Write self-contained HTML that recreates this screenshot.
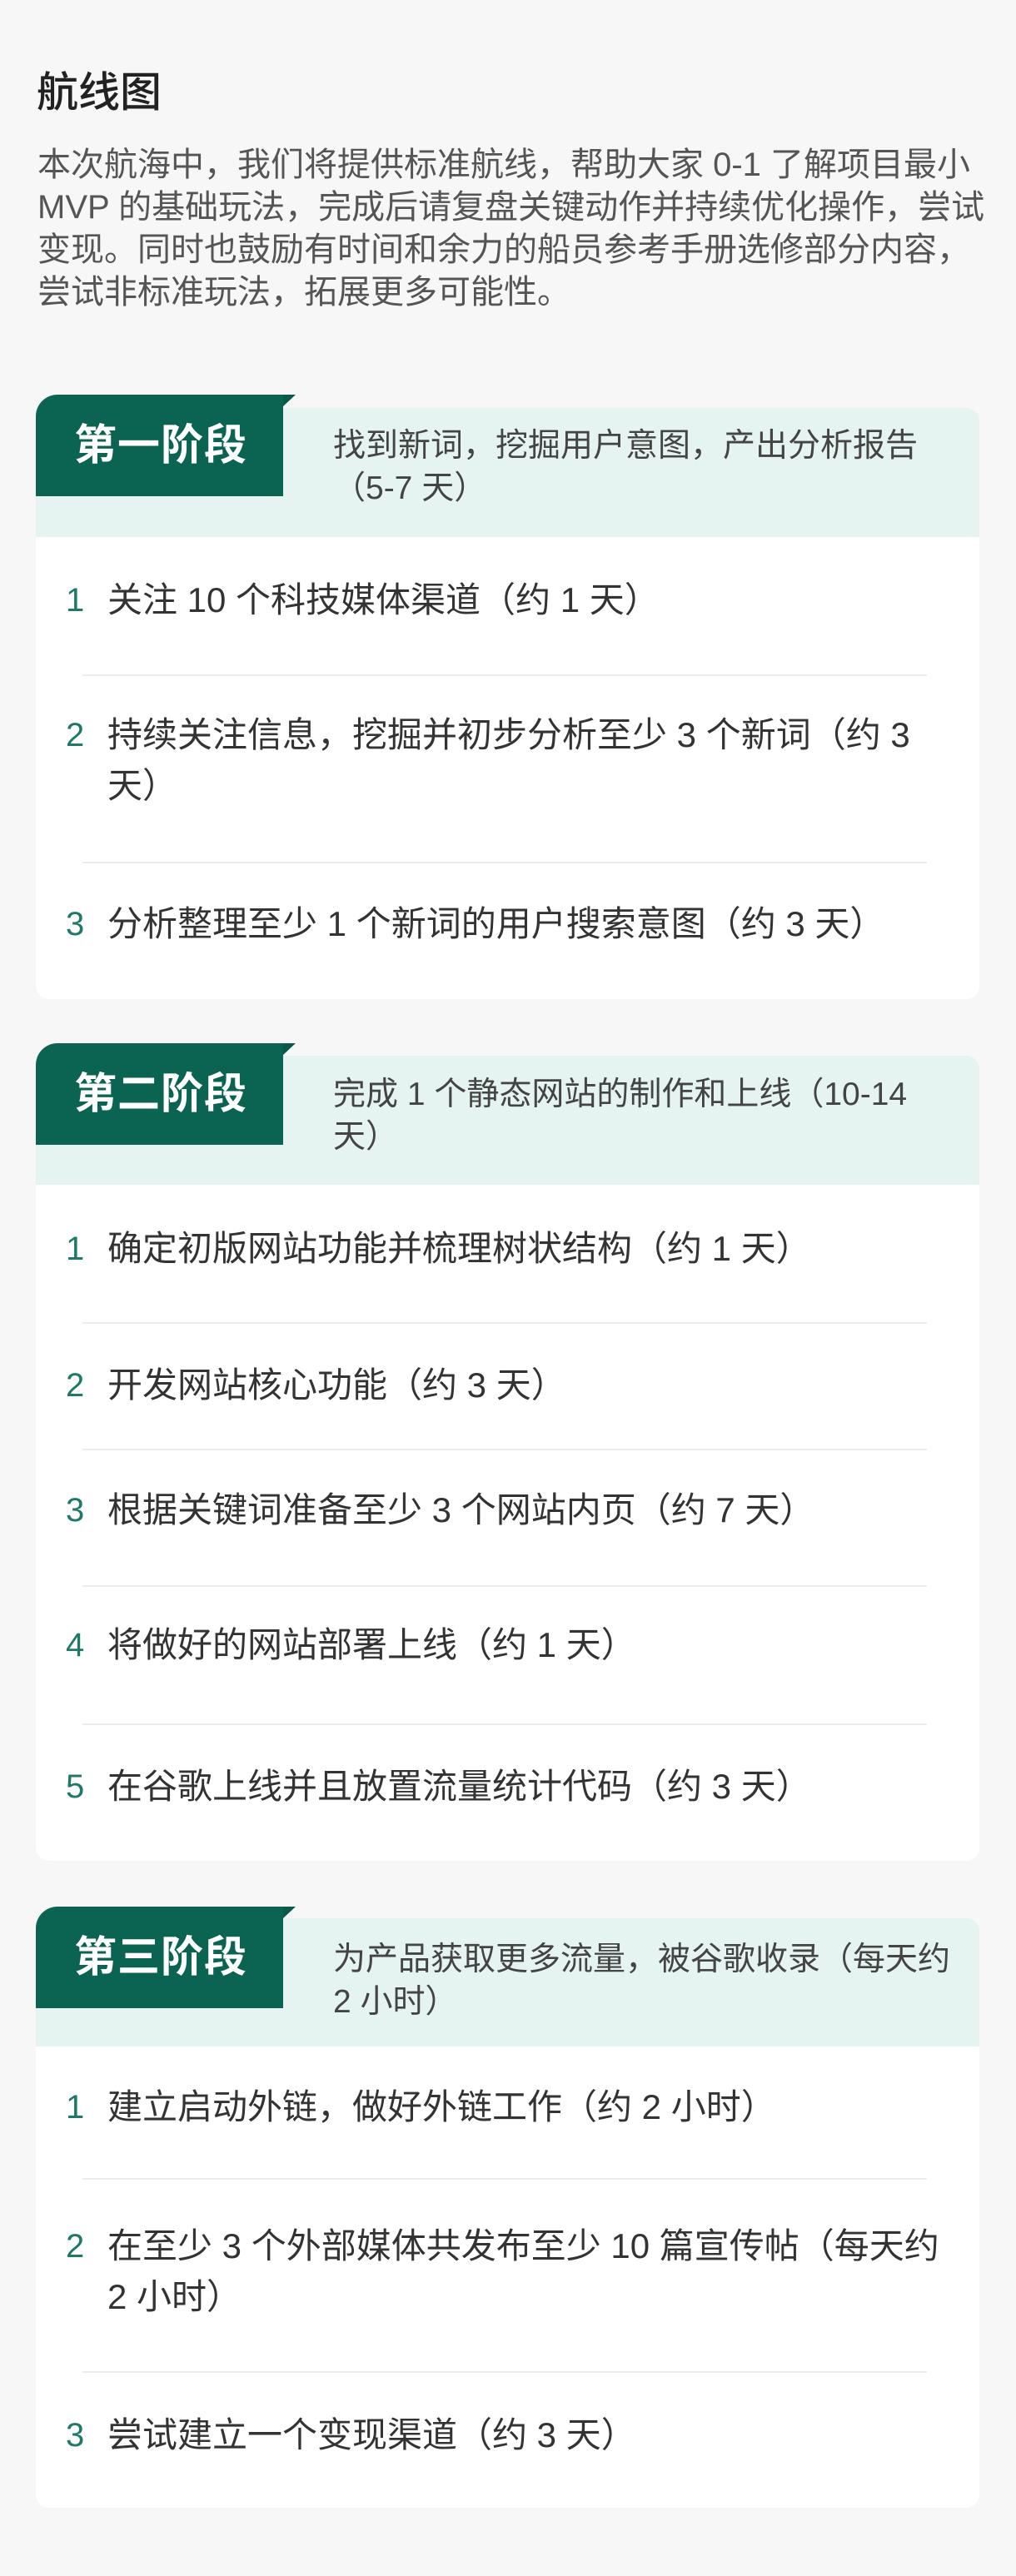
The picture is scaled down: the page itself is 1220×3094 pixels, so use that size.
<!DOCTYPE html>
<html><head><meta charset="utf-8"><style>
*{margin:0;padding:0;box-sizing:border-box}
body{width:1220px;height:3094px;background:#f7f7f7;font-family:"Liberation Sans","Noto Sans CJK SC",sans-serif;color:#333;position:relative;overflow:hidden}
.abs{position:absolute;white-space:nowrap}
h1{position:absolute;left:44px;top:81px;font-size:50px;font-weight:500;color:#222;line-height:60px}
.p{left:45px;top:173px;font-size:40px;line-height:51px;color:#555}
.card{position:absolute;left:43px;width:1133px;background:#fff;border-radius:16px;overflow:visible}
.band{position:absolute;left:0;right:0;background:#e5f3f1;border-radius:16px 16px 0 0}
.tab{position:absolute;left:0;width:297px;height:122px;background:#0b6351;border-radius:26px 0 0 0;color:#fff;font-weight:bold;font-size:51px;line-height:122px;padding-left:46px;letter-spacing:1px}
.fold{position:absolute;left:297px;width:0;height:0;border-left:15px solid #0b5a49;border-bottom:14px solid transparent}
.ht{position:absolute;left:357px;font-size:39px;line-height:51px;color:#444}
.num{position:absolute;left:36px;font-size:40px;color:#1e7a66;line-height:61px}
.it{position:absolute;left:86px;font-size:42px;line-height:61px;color:#333;white-space:nowrap}
.div{position:absolute;left:56px;width:1014px;height:2px;background:#ececec}
</style></head><body>
<h1>航线图</h1>
<div class="abs p">本次航海中，我们将提供标准航线，帮助大家 0-1 了解项目最小<br>MVP 的基础玩法，完成后请复盘关键动作并持续优化操作，尝试<br>变现。同时也鼓励有时间和余力的船员参考手册选修部分内容，<br>尝试非标准玩法，拓展更多可能性。</div>

<div class="card" style="top:490px;height:710px">
 <div class="band" style="top:0;height:155px"></div>
 <div class="tab" style="top:-16px">第一阶段</div>
 <div class="fold" style="top:-16px"></div>
 <div class="ht" style="top:20px">找到新词，挖掘用户意图，产出分析报告<br>（5-7 天）</div>
 <div class="num" style="top:201px">1</div><div class="it" style="top:200px">关注 10 个科技媒体渠道（约 1 天）</div>
 <div class="div" style="top:320px"></div>
 <div class="num" style="top:363px">2</div><div class="it" style="top:362px">持续关注信息，挖掘并初步分析至少 3 个新词（约 3<br>天）</div>
 <div class="div" style="top:545px"></div>
 <div class="num" style="top:590px">3</div><div class="it" style="top:589px">分析整理至少 1 个新词的用户搜索意图（约 3 天）</div>
</div>

<div class="card" style="top:1268px;height:967px">
 <div class="band" style="top:0;height:155px"></div>
 <div class="tab" style="top:-15px">第二阶段</div>
 <div class="fold" style="top:-15px"></div>
 <div class="ht" style="top:21px">完成 1 个静态网站的制作和上线（10-14<br>天）</div>
 <div class="num" style="top:202px">1</div><div class="it" style="top:201px">确定初版网站功能并梳理树状结构（约 1 天）</div>
 <div class="div" style="top:320px"></div>
 <div class="num" style="top:366px">2</div><div class="it" style="top:365px">开发网站核心功能（约 3 天）</div>
 <div class="div" style="top:472px"></div>
 <div class="num" style="top:516px">3</div><div class="it" style="top:515px">根据关键词准备至少 3 个网站内页（约 7 天）</div>
 <div class="div" style="top:636px"></div>
 <div class="num" style="top:678px">4</div><div class="it" style="top:677px">将做好的网站部署上线（约 1 天）</div>
 <div class="div" style="top:802px"></div>
 <div class="num" style="top:848px">5</div><div class="it" style="top:847px">在谷歌上线并且放置流量统计代码（约 3 天）</div>
</div>

<div class="card" style="top:2304px;height:708px">
 <div class="band" style="top:0;height:154px"></div>
 <div class="tab" style="top:-14px">第三阶段</div>
 <div class="fold" style="top:-14px"></div>
 <div class="ht" style="top:24px">为产品获取更多流量，被谷歌收录（每天约<br>2 小时）</div>
 <div class="num" style="top:197px">1</div><div class="it" style="top:196px">建立启动外链，做好外链工作（约 2 小时）</div>
 <div class="div" style="top:312px"></div>
 <div class="num" style="top:364px">2</div><div class="it" style="top:363px">在至少 3 个外部媒体共发布至少 10 篇宣传帖（每天约<br>2 小时）</div>
 <div class="div" style="top:544px"></div>
 <div class="num" style="top:591px">3</div><div class="it" style="top:590px">尝试建立一个变现渠道（约 3 天）</div>
</div>
</body></html>
